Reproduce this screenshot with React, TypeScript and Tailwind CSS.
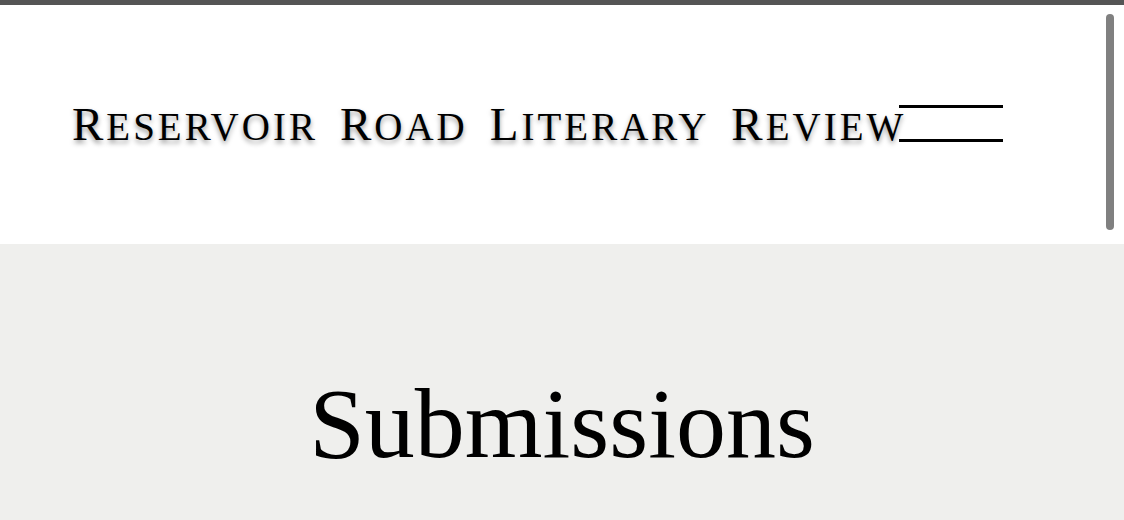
import React from 'react';

const words = ['Reservoir', 'Road', 'Literary', 'Review'];

const Logo: React.FC = () => (
  <div
    className="flex items-baseline gap-[22px] text-black whitespace-nowrap"
    style={{ fontFamily: '"Liberation Serif", "Times New Roman", serif' }}
  >
    {words.map((w) => (
      <span
        key={w}
        className="tracking-[3px] [text-shadow:0_3px_5px_rgba(0,0,0,0.4)]"
      >
        <span className="text-[47px] leading-none">{w[0]}</span>
        <span className="text-[39px] leading-none">{w.slice(1).toUpperCase()}</span>
      </span>
    ))}
  </div>
);

export default function App() {
  return (
    <div className="w-[1124px] h-[520px] overflow-hidden bg-[#efefed] relative">
      <div className="h-[5px] bg-[#555555]" />
      <header className="h-[239px] bg-white flex items-center pl-[72px]">
        <Logo />
        <button className="w-[104px] h-[37px] flex flex-col justify-between -ml-[7px] mt-[-2px]" aria-label="Menu">
          <span className="block h-[3px] bg-black" />
          <span className="block h-[3px] bg-black" />
        </button>
      </header>
      <main className="flex justify-center pt-[130px]">
        <h1
          className="text-[100px] leading-none text-black"
          style={{ fontFamily: '"Liberation Serif", "Times New Roman", serif' }}
        >
          Submissions
        </h1>
      </main>
      <div className="absolute right-[10px] top-[14px] w-[8px] h-[216px] rounded-full bg-[#808080]" />
    </div>
  );
}
